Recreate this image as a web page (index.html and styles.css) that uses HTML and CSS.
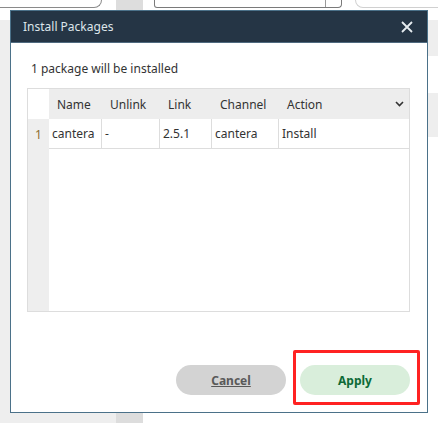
FILE: index.html
```html
<!DOCTYPE html>
<html>
<head>
<meta charset="utf-8">
<link rel="stylesheet" href="styles.css">
</head>
<body>
<div class="desk">
  <div class="col-left">
    <div class="field-top"><div class="field1"></div></div>
    <div class="side-fill"></div>
  </div>
  <div class="col-scroll"></div>
  <div class="col-main">
    <div class="main-top">
      <div class="field2"><span class="field2-btn"></span></div>
      <div class="field3"></div>
    </div>
    <div class="panel p1"></div>
    <div class="panel p2"></div>
  </div>
</div>

<div class="dialog">
  <div class="dlg-head">
    <span class="dlg-title">Install Packages</span>
    <svg class="dlg-close" width="12" height="12" viewBox="0 0 12 12"><path d="M1 1L11 11M11 1L1 11" stroke="#e6ecf0" stroke-width="1.8" fill="none"/></svg>
  </div>
  <div class="dlg-body">
    <div class="msg">1 package will be installed</div>
    <div class="grid">
      <div class="hc corner"></div>
      <div class="hc">Name</div>
      <div class="hc">Unlink</div>
      <div class="hc">Link</div>
      <div class="hc">Channel</div>
      <div class="hc last">Action<svg class="chev" width="9" height="6" viewBox="0 0 9 6"><path d="M1 1L4.5 4.5L8 1" stroke="#333" stroke-width="1.6" fill="none"/></svg></div>
      <div class="rn">1</div>
      <div class="dc">cantera</div>
      <div class="dc">-</div>
      <div class="dc">2.5.1</div>
      <div class="dc">cantera</div>
      <div class="dc lastc">Install</div>
      <div class="rn-fill"></div>
      <div class="empty"></div>
    </div>
    <div class="footer">
      <button class="btn cancel">Cancel</button>
      <button class="btn apply">Apply</button>
    </div>
  </div>
  <div class="highlight"></div>
</div>
</body>
</html>
```
FILE: styles.css
```css
body {
  margin: 0;
  width: 438px;
  height: 423px;
  overflow: hidden;
  position: relative;
  background: #fff;
  font-family: "Noto Sans", "Open Sans", sans-serif;
}
.desk { display: flex; height: 423px; }
.col-left { width: 116px; display: flex; flex-direction: column; }
.field-top { height: 20px; background: #fff; }
.field1 {
  width: 101px; height: 7px;
  border: 1px solid #8a8a8a; border-top: 0; border-left: 0;
  border-bottom-right-radius: 8px;
}
.side-fill { flex: 1; background: #eee; }
.col-scroll { width: 27px; background: #ddd; }
.col-main { flex: 1; min-width: 0; display: flex; flex-direction: column; align-items: flex-end; }
.main-top { height: 20px; align-self: stretch; display: flex; }
.field2 {
  margin-left: 11px; width: 186px; height: 7px; flex: none;
  border: 1px solid #7a7a7a; border-top: 0;
  border-radius: 0 0 4px 3px;
  display: flex; justify-content: flex-end;
}
.field2-btn { width: 15px; border-left: 1px solid #9a9a9a; }
.field3 {
  margin-left: 13px; width: 100px; height: 7px; flex: none;
  border: 1px solid #d0d0d0; border-top: 0;
  border-radius: 0 0 0 9px;
}
.panel { width: 40px; background: #eee; }
.p1 { height: 36px; }
.p2 { margin-top: 37px; height: 44px; }

.dialog {
  position: absolute; left: 10px; top: 10px;
  width: 416px; height: 401px;
  border: 1px solid #4b7189;
  background: #fff;
  display: flex; flex-direction: column;
}
.dlg-head {
  height: 31px; flex: none;
  background: #253545;
  border-bottom: 1px solid #4f6a7f;
  display: flex; align-items: center; justify-content: space-between;
  padding: 0 14px 0 12px;
}
.dlg-title { color: #dde5ea; font-size: 12px; }
.dlg-close { display: block; }
.dlg-body {
  flex: 1;
  padding: 17px 17px 17px 16px;
  display: flex; flex-direction: column;
}
.msg {
  height: 18px; line-height: 18px;
  padding-left: 4px;
  font-size: 12px; color: #333;
  margin-bottom: 10px;
}
.grid {
  height: 224px; box-sizing: border-box;
  border: 1px solid #ddd;
  display: grid;
  grid-template-columns: 21px 53px 58px 52px 67px 1fr;
  grid-template-rows: 30px 30px 1fr;
  font-size: 12px; color: #333;
}
.hc {
  background: #ededed;
  display: flex; align-items: center;
  padding-left: 8px;
}
.hc.corner { background: #fff; padding: 0; }
.hc.last { justify-content: space-between; padding-right: 5px; }
.chev { display: block; }
.rn {
  background: #eee; color: #8f6f30;
  display: flex; align-items: center; justify-content: center;
}
.dc {
  display: flex; align-items: center;
  padding-left: 3px;
  border-right: 1px solid #ddd;
  border-bottom: 1px solid #ddd;
}
.dc.lastc { border-right: 0; }
.rn-fill { background: #eee; }
.empty { grid-column: 2 / 7; }
.footer {
  margin-top: 53px;
  display: flex; justify-content: flex-end; gap: 14px;
}
.btn {
  width: 110px; height: 30px;
  border: 0; border-radius: 15px;
  font-family: "Noto Sans", "Open Sans", sans-serif;
  font-size: 12px; font-weight: bold;
  padding: 0;
}
.cancel { background: #d3d3d3; color: #595959; text-decoration: underline; }
.apply { background: #d9eedb; color: #0d6a36; }
.highlight {
  position: absolute;
  left: 282px; top: 339px;
  width: 127px; height: 55px;
  box-sizing: border-box;
  border: 3px solid #ff2222;
  border-radius: 2px;
}
```
